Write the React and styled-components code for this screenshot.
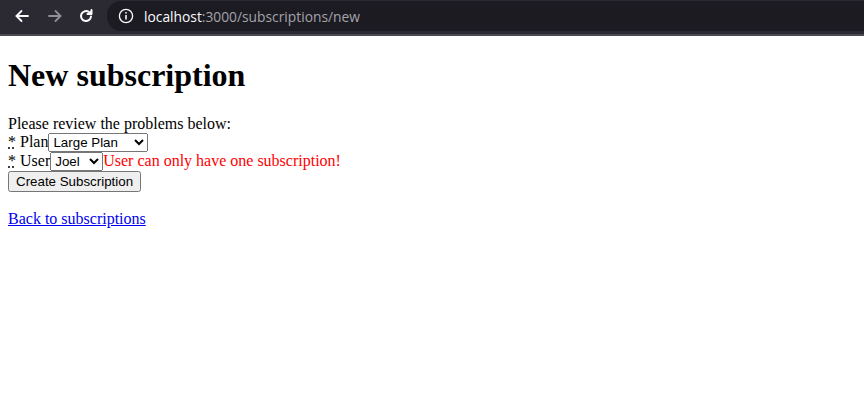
import React from "react";
import styled, { createGlobalStyle } from "styled-components";

const Global = createGlobalStyle`
  html, body { margin: 0; padding: 0; background: #fff; }
  body { font-family: "Liberation Serif", "Times New Roman", serif; font-size: 16px; }
`;

const Toolbar = styled.div`
  height: 30px;
  background: #2b2a33;
  border-bottom: 3px solid #2b2a33;
  box-shadow: 0 2px 0 #4a4950;
  margin-bottom: 2px;
  display: flex;
  align-items: stretch;
  padding-top: 1px;
  box-sizing: content-box;
`;

const NavButtons = styled.div`
  display: flex;
  align-items: center;
  padding-left: 12px;
  width: 95px;
`;

const NavIcon = styled.span`
  width: 20px;
  height: 20px;
  display: flex;
  align-items: center;
  justify-content: center;
  margin-right: ${(p) => p.$gap}px;
  color: ${(p) => (p.$dim ? "#8f8f94" : "#fbfbfe")};
`;

const UrlBar = styled.div`
  flex: 1;
  background: #1c1b22;
  border-radius: 14px 0 0 14px;
  display: flex;
  align-items: center;
  padding-left: 11px;
  font-family: "Open Sans", "Noto Sans", sans-serif;
  font-size: 13.8px;
`;

const Host = styled.span`
  color: #fbfbfe;
  margin-left: 10px;
`;
const Path = styled.span`
  color: #a3a3aa;
`;

const Page = styled.div`
  padding: 0 8px;
  display: flow-root;
`;

const Title = styled.h1`
  font-size: 32px;
  font-weight: bold;
  margin: 21px 0 21px;
  line-height: 37px;
`;

const Line = styled.div`
  line-height: 18px;
`;

const Field = styled.div``;

const Req = styled.abbr`
  text-decoration: underline dotted;
`;

const Select = styled.select`
  font-family: "Liberation Sans", Arial, sans-serif;
  font-size: 13.33px;
  width: ${(p) => p.$w}px;
`;

const Error = styled.span`
  color: red;
`;

const Submit = styled.button`
  font-family: "Liberation Sans", Arial, sans-serif;
  font-size: 13.33px;
`;

const Back = styled.a`
  display: inline-block;
  margin-top: 18px;
  color: #0000ee;
`;

const Arrow = ({ dir }) => (
  <svg width="16" height="16" viewBox="0 0 16 16" fill="none" stroke="currentColor" strokeWidth="1.8" strokeLinecap="round" strokeLinejoin="round">
    {dir === "left" ? (
      <>
        <path d="M14 8H2.5" />
        <path d="M7.5 3 2.5 8l5 5" />
      </>
    ) : (
      <>
        <path d="M2 8h11.5" />
        <path d="M8.5 3l5 5-5 5" />
      </>
    )}
  </svg>
);

const Reload = () => (
  <svg width="16" height="16" viewBox="0 0 16 16" fill="none" stroke="currentColor" strokeWidth="2" strokeLinecap="round" strokeLinejoin="round">
    <path d="M13 8.5A5 5 0 1 1 11 4" />
    <path d="M13.5 2v4h-4" fill="currentColor" />
  </svg>
);

const Info = () => (
  <svg width="16" height="16" viewBox="0 0 16 16" fill="none" stroke="#fbfbfe" strokeWidth="1.3">
    <circle cx="8" cy="8" r="6.6" />
    <path d="M8 7v4.5" strokeWidth="1.6" />
    <circle cx="8" cy="4.8" r="0.9" fill="#fbfbfe" stroke="none" />
  </svg>
);

export default function App() {
  return (
    <>
      <Global />
      <Toolbar>
        <NavButtons>
          <NavIcon $gap={13}><Arrow dir="left" /></NavIcon>
          <NavIcon $gap={11} $dim><Arrow dir="right" /></NavIcon>
          <NavIcon $gap={0}><Reload /></NavIcon>
        </NavButtons>
        <UrlBar>
          <Info />
          <Host>localhost</Host>
          <Path>:3000/subscriptions/new</Path>
        </UrlBar>
      </Toolbar>
      <Page>
        <Title>New subscription</Title>
        <form onSubmit={(e) => e.preventDefault()}>
          <Line>Please review the problems below:</Line>
          <Field>
            <label><Req title="required">*</Req> Plan</label>
            <Select $w={100} defaultValue="large">
              <option value="large">Large Plan</option>
              <option value="small">Small Plan</option>
            </Select>
          </Field>
          <Field>
            <label><Req title="required">*</Req> User</label>
            <Select $w={53} defaultValue="joel">
              <option value="joel">Joel</option>
            </Select>
            <Error>User can only have one subscription!</Error>
          </Field>
          <Submit type="submit">Create Subscription</Submit>
        </form>
        <Back href="#">Back to subscriptions</Back>
      </Page>
    </>
  );
}
